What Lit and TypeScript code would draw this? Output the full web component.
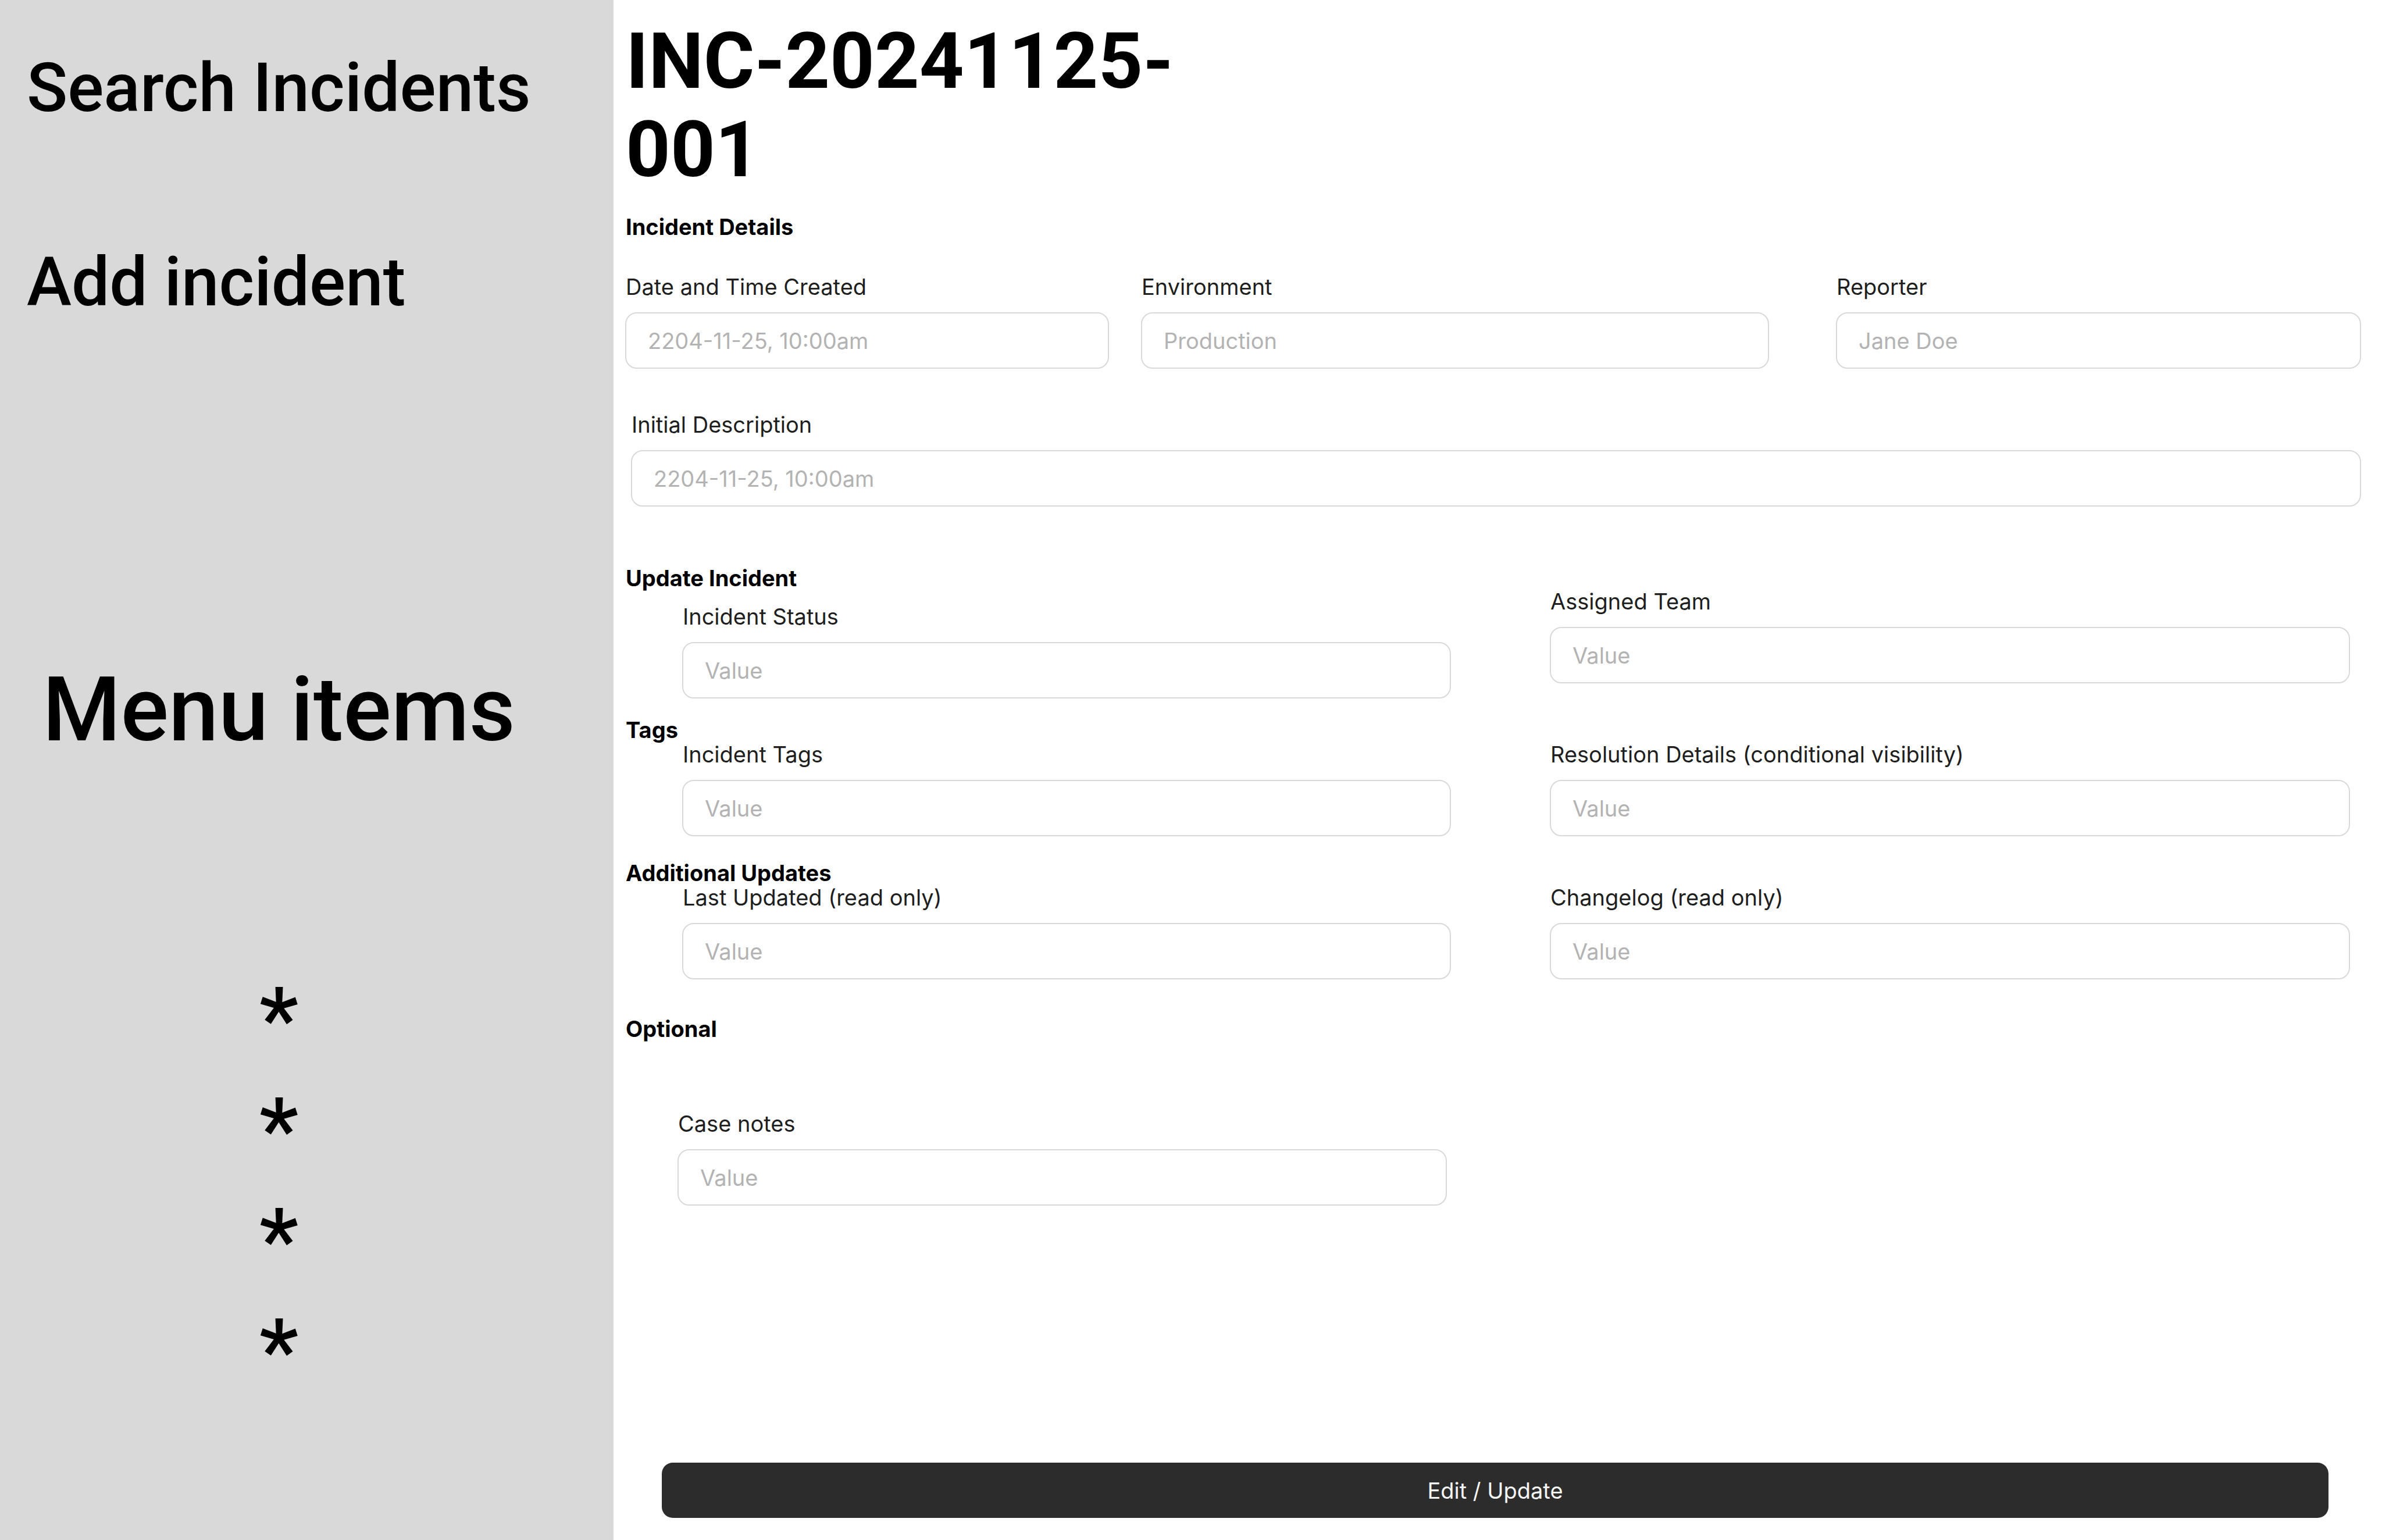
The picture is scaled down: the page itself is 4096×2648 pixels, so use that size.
import { LitElement, html, css } from "lit";
import { customElement, property } from "lit/decorators.js";

@customElement("text-field")
export class TextField extends LitElement {
  @property() label = "";
  @property() placeholder = "Value";
  @property({ type: Boolean }) readonly = false;

  static styles = css`
    :host {
      display: block;
      min-width: 0;
    }
    .label {
      display: block;
      margin-bottom: 23px;
      padding-left: 1px;
      font-size: 38px;
      line-height: 42px;
      color: #1e1e1e;
      white-space: nowrap;
    }
    .input {
      display: block;
      box-sizing: border-box;
      width: 100%;
      height: 97px;
      margin: 0;
      padding: 0 37px;
      border: 2px solid #d9d9d9;
      border-radius: 20px;
      background: #ffffff;
      font: 400 38px Inter, sans-serif;
      color: #1e1e1e;
      outline: none;
    }
    .input::placeholder {
      color: #b3b3b3;
      opacity: 1;
    }
  `;

  render() {
    return html`
      <label class="label" for="field">${this.label}</label>
      <input
        class="input"
        id="field"
        type="text"
        placeholder=${this.placeholder}
        ?readonly=${this.readonly}
      />
    `;
  }
}

@customElement("app-root")
export class AppRoot extends LitElement {
  static styles = css`
    :host {
      display: block;
      font-family: Inter, sans-serif;
      color: #000000;
    }
    .page {
      display: grid;
      grid-template-columns: 1055px minmax(0, 1fr);
      min-height: 100vh;
      background: #ffffff;
    }
    .sidebar {
      display: flex;
      flex-direction: column;
      background: #d9d9d9;
      font-family: Roboto, sans-serif;
      font-weight: 500;
    }
    .actions {
      display: flex;
      flex-direction: column;
      align-items: flex-start;
      gap: 182px;
      padding: 75px 46px 0;
    }
    .action {
      font-size: 116px;
      line-height: 152px;
      color: inherit;
      text-decoration: none;
      white-space: nowrap;
    }
    .menu {
      padding: 565px 96px 0 0;
      font-size: 152px;
      line-height: 190px;
      text-align: center;
    }
    .menu-title {
      margin: 0;
      font-size: 154px;
      font-weight: 500;
    }
    .menu-list {
      margin: 0;
      padding: 342px 0 0;
      list-style: none;
    }
    .content {
      display: flex;
      flex-direction: column;
      padding: 30px 36px 38px 20px;
    }
    .title {
      max-width: 1000px;
      margin: 0 0 35px;
      padding-left: 1px;
      font: 700 134px/152px Roboto, sans-serif;
    }
    .heading {
      margin: 0;
      padding-left: 1px;
      font-size: 38px;
      font-weight: 700;
      line-height: 42px;
    }
    .details {
      display: flex;
      gap: 55px;
      margin-top: 61px;
    }
    .date {
      flex: 832 1 0;
    }
    .environment {
      flex: 1080 1 0;
    }
    .reporter {
      flex: 903 1 0;
      margin-left: 60px;
    }
    .description {
      margin: 75px 0 102px 10px;
    }
    .row {
      display: grid;
      grid-template-columns: 1420fr 1376fr;
      column-gap: 170px;
      align-items: end;
      padding-right: 19px;
    }
    .update {
      align-items: start;
      margin-bottom: 33px;
    }
    .update .field {
      margin-top: 24px;
    }
    .update .side {
      margin-top: 40px;
    }
    .tags {
      margin-bottom: 42px;
    }
    .additional {
      margin-bottom: 64px;
    }
    .field {
      margin-left: 98px;
    }
    .notes {
      margin: 121px 7px 0 90px;
    }
    .submit {
      height: 95px;
      margin: auto 56px 0 63px;
      padding: 0;
      border: 0;
      border-radius: 19px;
      background: #2c2c2c;
      color: #f5f5f5;
      font: 400 38px Inter, sans-serif;
      cursor: pointer;
    }
  `;

  render() {
    return html`
      <div class="page">
        <nav class="sidebar">
          <div class="actions">
            <a class="action" href="#search">Search Incidents</a>
            <a class="action" href="#add">Add incident</a>
          </div>
          <div class="menu">
            <h2 class="menu-title">Menu items</h2>
            <ul class="menu-list">
              <li>*</li>
              <li>*</li>
              <li>*</li>
              <li>*</li>
            </ul>
          </div>
        </nav>
        <main class="content">
          <h1 class="title">INC-20241125-001</h1>

          <h2 class="heading">Incident Details</h2>
          <div class="details">
            <text-field class="date" label="Date and Time Created" placeholder="2204-11-25, 10:00am"></text-field>
            <text-field class="environment" label="Environment" placeholder="Production"></text-field>
            <text-field class="reporter" label="Reporter" placeholder="Jane Doe"></text-field>
          </div>
          <text-field class="description" label="Initial Description" placeholder="2204-11-25, 10:00am"></text-field>

          <section class="row update">
            <div>
              <h2 class="heading">Update Incident</h2>
              <text-field class="field" label="Incident Status"></text-field>
            </div>
            <text-field class="side" label="Assigned Team"></text-field>
          </section>

          <section class="row tags">
            <div>
              <h2 class="heading">Tags</h2>
              <text-field class="field" label="Incident Tags"></text-field>
            </div>
            <text-field label="Resolution Details (conditional visibility)"></text-field>
          </section>

          <section class="row additional">
            <div>
              <h2 class="heading">Additional Updates</h2>
              <text-field class="field" label="Last Updated (read only)" readonly></text-field>
            </div>
            <text-field label="Changelog (read only)" readonly></text-field>
          </section>

          <section class="row">
            <div>
              <h2 class="heading">Optional</h2>
              <text-field class="notes" label="Case notes"></text-field>
            </div>
          </section>

          <button class="submit" type="button">Edit / Update</button>
        </main>
      </div>
    `;
  }
}
